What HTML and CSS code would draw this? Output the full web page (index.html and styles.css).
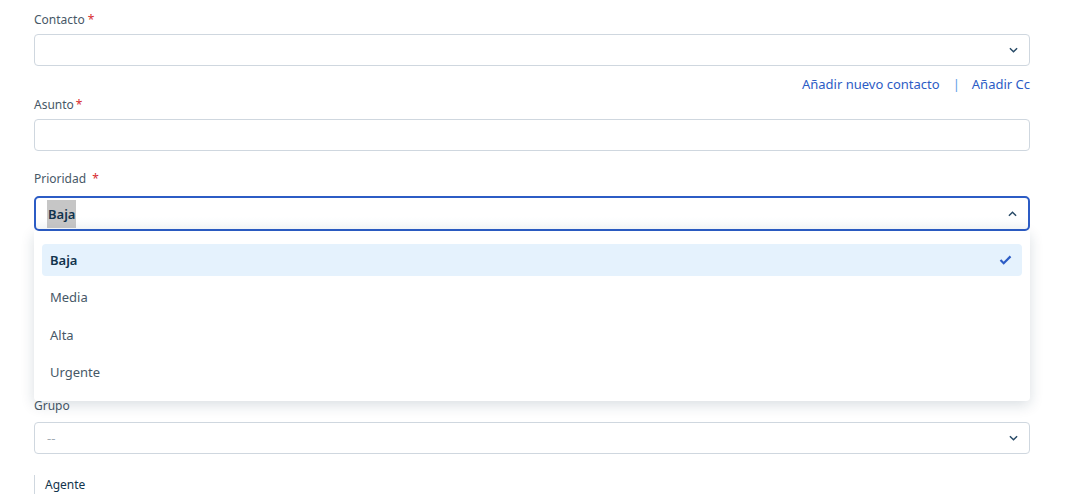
FILE: index.html
```html
<!DOCTYPE html>
<html lang="es">
<head>
<meta charset="utf-8">
<link rel="stylesheet" href="styles.css">
</head>
<body>
<form class="form">
  <div class="field">
    <label class="label">Contacto <span class="req">*</span></label>
    <div class="control">
      <span class="value"></span>
      <svg class="chev" viewBox="0 0 10 6" width="9" height="6"><path d="M1 1 L5 5 L9 1" fill="none" stroke="#264966" stroke-width="1.6"/></svg>
    </div>
  </div>
  <div class="links">
    <a class="link">Añadir nuevo contacto</a>
    <span class="sep">|</span>
    <a class="link">Añadir Cc</a>
  </div>
  <div class="field field-asunto">
    <label class="label">Asunto<span class="req req-tight">*</span></label>
    <div class="control"></div>
  </div>
  <div class="field field-prio">
    <label class="label">Prioridad &nbsp;<span class="req">*</span></label>
    <div class="select-wrap">
      <div class="control control-open">
        <span class="sel-text">Baja</span>
        <svg class="chev" viewBox="0 0 10 6" width="9" height="6"><path d="M1 5 L5 1 L9 5" fill="none" stroke="#264966" stroke-width="1.6"/></svg>
      </div>
      <ul class="menu">
        <li class="opt opt-active">Baja
          <svg class="check" viewBox="0 0 14 11" width="13" height="10"><path d="M1.5 5.5 L5 9 L12.5 1.5" fill="none" stroke="#2c5cc5" stroke-width="2.4"/></svg>
        </li>
        <li class="opt">Media</li>
        <li class="opt">Alta</li>
        <li class="opt">Urgente</li>
      </ul>
    </div>
  </div>
  <div class="field field-grupo">
    <label class="label">Grupo</label>
    <div class="control">
      <span class="placeholder">--</span>
      <svg class="chev" viewBox="0 0 10 6" width="9" height="6"><path d="M1 1 L5 5 L9 1" fill="none" stroke="#264966" stroke-width="1.6"/></svg>
    </div>
  </div>
  <div class="agent">
    <label class="label agent-label">Agente</label>
  </div>
</form>
</body>
</html>
```
FILE: styles.css
```css
* { box-sizing: border-box; }
html, body { margin: 0; padding: 0; background: #fff; }
body {
  font-family: "Noto Sans", "Open Sans", sans-serif;
  color: #12344d;
  overflow: hidden;
  height: 494px;
}
.form {
  width: 996px;
  margin-left: 34px;
  padding-top: 12px;
}
.field { display: flex; flex-direction: column; }
.label {
  font-size: 12px;
  line-height: 16px;
  color: #475867;
  margin-bottom: 6px;
}
.req { color: #d72d30; }
.req-tight { margin-left: 2px; }
.control {
  height: 32px;
  border: 1px solid #cfd7df;
  border-radius: 4px;
  background: #fff;
  display: flex;
  align-items: center;
  justify-content: space-between;
  padding: 0 11px 0 12px;
}
.chev { display: block; margin-left: auto; }
.links {
  display: flex;
  justify-content: flex-end;
  align-items: center;
  height: 16px;
  margin-top: 10px;
  font-size: 13px;
  line-height: 16px;
}
.link { color: #2c5cc5; text-decoration: none; }
.sep { color: #5b9ee6; margin: 0 12px 0 13px; }
.field-asunto { margin-top: 5px; }
.field-prio { margin-top: 20px; }
.field-prio .label { margin-bottom: 9px; }
.select-wrap { position: relative; }
.control-open {
  height: 35px;
  border: 2px solid #2c5cc5;
  border-radius: 5px;
  padding: 0 11px 0 11px;
  background: linear-gradient(#fff 60%, #f7f9fa);
}
.sel-text {
  background: #c6c6c6;
  font-size: 13px;
  font-weight: 600;
  line-height: 28px;
  padding: 0 1px;
  color: #12344d;
}
.menu {
  position: absolute;
  top: 35px;
  left: 0;
  right: 0;
  margin: 0;
  list-style: none;
  background: #fff;
  border-radius: 0 0 4px 4px;
  box-shadow: 0 4px 14px rgba(18, 52, 77, 0.16);
  padding: 13px 8px 11px 8px;
  z-index: 5;
  height: 170px;
}
.opt {
  height: 32px;
  margin-bottom: 5.3px;
  padding: 0 8px;
  display: flex;
  align-items: center;
  font-size: 13px;
  color: #475867;
  border-radius: 4px;
}
.opt-active {
  background: #e5f2fd;
  color: #12344d;
  font-weight: 600;
}
.check { margin-left: auto; margin-right: 2px; }
.field-grupo { margin-top: 167px; }
.field-grupo .label { margin-bottom: 8px; }
.placeholder { color: #a3acb5; font-size: 13px; }
.agent {
  margin-top: 21px;
  border-left: 1px solid #cfd7df;
  padding-left: 10px;
  padding-top: 2px;
  height: 19px;
  font-size: 12px;
  line-height: 16px;
}
.agent-label { display: block; font-size: 12px; color: #12344d; margin: 0; }
```
